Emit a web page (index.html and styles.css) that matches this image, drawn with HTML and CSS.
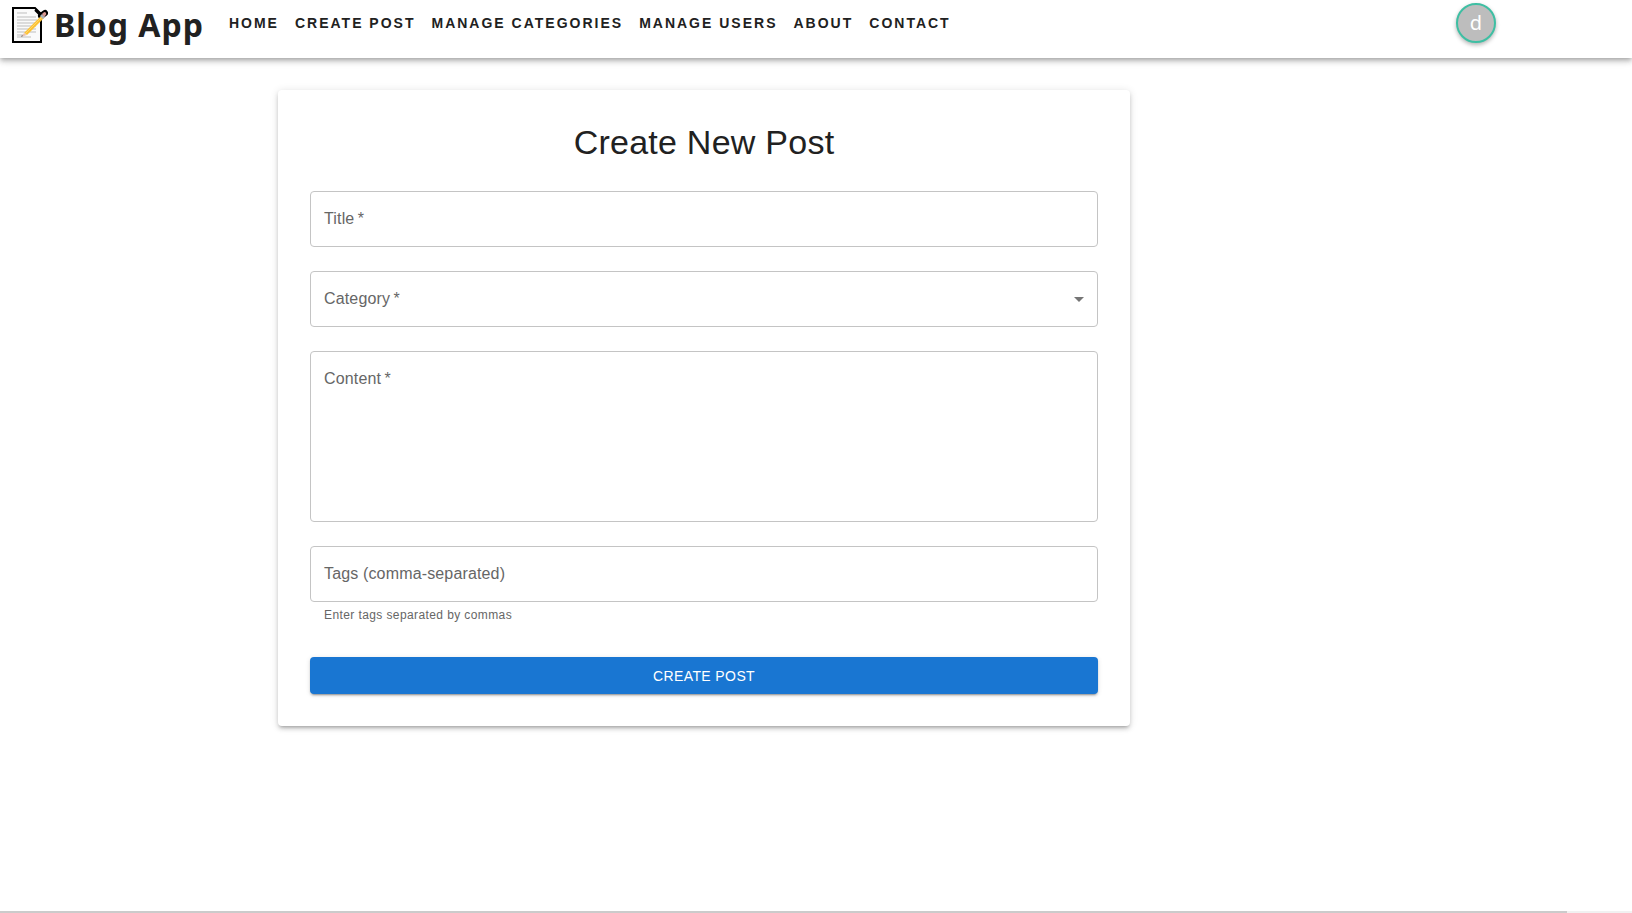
FILE: index.html
```html
<!DOCTYPE html>
<html lang="en">
<head>
<meta charset="utf-8">
<title>Blog App</title>
<link rel="stylesheet" href="styles.css">
</head>
<body>
<header class="app-bar">
  <a class="brand" href="#">
    <svg class="brand-icon" viewBox="0 0 36 36" aria-hidden="true">
      <path d="M1 1H23L29 7V35H1Z" fill="#fafafa" stroke="#000" stroke-width="2"/>
      <path d="M5 6H15M5 10H24M5 13H25M5 16H24M5 19H24M5 22H24M5 25H24M5 28H11M5 30H19" stroke="#bdbdbd" stroke-width="1"/>
      <path d="M29 9L33 6" stroke="#000" stroke-width="6" stroke-linecap="round"/>
      <path d="M23 3L29 9" stroke="#000" stroke-width="2"/>
      <path d="M12 26L29 9L32 11L15 28Z" fill="#fcc134"/>
      <path d="M13 27L30 10" stroke="#ffd566" stroke-width="1"/>
      <path d="M9 30L12 26L15 28Z" fill="#eac3b4"/>
      <path d="M9 30L10 28L11 29Z" fill="#666"/>
      <path d="M28 9L30 7L33 10L31 12Z" fill="#a9b3b8"/>
      <path d="M30 7L31 6Q33 4 34 6Q35 7 33 9L32 10Z" fill="#d99790"/>
    </svg>
    <span class="brand-name">Blog App</span>
  </a>
  <nav class="nav">
    <a href="#">Home</a>
    <a href="#">Create Post</a>
    <a href="#">Manage Categories</a>
    <a href="#">Manage Users</a>
    <a href="#">About</a>
    <a href="#">Contact</a>
  </nav>
  <button class="avatar" type="button" aria-label="Account menu">d</button>
</header>
<main class="page">
  <form class="card">
    <h1 class="card-title">Create New Post</h1>
    <div class="field">
      <label class="label" for="title">Title&#8201;*</label>
      <input class="control" id="title" type="text">
    </div>
    <div class="field">
      <label class="label" for="category">Category&#8201;*</label>
      <select class="control select" id="category"><option></option></select>
      <svg class="arrow" viewBox="0 0 24 24" aria-hidden="true"><path d="M7 10l5 5 5-5z"/></svg>
    </div>
    <div class="field">
      <label class="label" for="content">Content&#8201;*</label>
      <textarea class="control content" id="content"></textarea>
    </div>
    <div class="field">
      <label class="label" for="tags">Tags (comma-separated)</label>
      <input class="control" id="tags" type="text" aria-describedby="tags-help">
      <p class="helper" id="tags-help">Enter tags separated by commas</p>
    </div>
    <button class="submit" type="submit">Create Post</button>
  </form>
</main>
<div class="scroll-track" aria-hidden="true"><div class="scroll-thumb"></div></div>
</body>
</html>
```

FILE: styles.css
```css
* { box-sizing: border-box; }

body {
  margin: 0;
  min-height: 100vh;
  display: flex;
  flex-direction: column;
  background: #fff;
  color: #212121;
  font-family: Arial, "Liberation Sans", sans-serif;
}

.app-bar {
  display: flex;
  align-items: flex-start;
  height: 58px;
  padding: 3px 136px 0 12px;
  background: #fff;
  box-shadow: 0 2px 4px -1px rgba(0, 0, 0, .2), 0 4px 5px rgba(0, 0, 0, .14), 0 1px 10px rgba(0, 0, 0, .12);
}

.brand {
  display: flex;
  align-items: center;
  gap: 6px;
  height: 44px;
  color: #212121;
  text-decoration: none;
}

.brand-icon { width: 36px; height: 36px; }

.brand-name {
  font: 700 32px/44px "Comic Sans MS", "Noto Sans", sans-serif;
  letter-spacing: 1px;
}

.nav {
  display: flex;
  flex: 1;
  gap: 16px;
  margin-left: 25px;
}

.nav a {
  color: #212121;
  font-size: 14px;
  font-weight: 700;
  line-height: 40px;
  letter-spacing: 2px;
  text-transform: uppercase;
  text-decoration: none;
}

.avatar {
  width: 40px;
  height: 40px;
  padding: 0;
  border: 2px solid #3ebfa3;
  border-radius: 50%;
  background: #bdbdbd;
  color: #fff;
  font: 20px/34px "Noto Sans", sans-serif;
  box-shadow: 0 2px 4px rgba(0, 0, 0, .3);
}

.page {
  flex: 1;
  width: 100%;
  max-width: 1408px;
  padding: 32px 24px;
}

.card {
  display: flex;
  flex-direction: column;
  gap: 24px;
  max-width: 852px;
  margin: 0 auto;
  padding: 32px;
  border-radius: 4px;
  background: #fff;
  box-shadow: 0 3px 3px -2px rgba(0, 0, 0, .2), 0 3px 4px rgba(0, 0, 0, .14), 0 1px 8px rgba(0, 0, 0, .12);
}

.card-title {
  margin: 0 0 5px;
  font-size: 34px;
  font-weight: 400;
  line-height: 40px;
  letter-spacing: .00735em;
  text-align: center;
}

.field { position: relative; }

.label {
  position: absolute;
  top: 16px;
  left: 14px;
  color: #666;
  font-size: 16px;
  line-height: 23px;
  letter-spacing: .00938em;
  pointer-events: none;
}

.control {
  display: block;
  width: 100%;
  height: 56px;
  padding: 16px 14px;
  border: 1px solid #c4c4c4;
  border-radius: 4px;
  background: transparent;
  color: #212121;
  font: 16px/23px Arial, "Liberation Sans", sans-serif;
}

.select { appearance: none; }

.content { height: 171px; resize: none; }

.arrow {
  position: absolute;
  top: 16px;
  right: 7px;
  width: 24px;
  height: 24px;
  fill: #757575;
  pointer-events: none;
}

.helper {
  margin: 3px 14px 0;
  color: #666;
  font-size: 12px;
  line-height: 20px;
  letter-spacing: .03333em;
}

.submit {
  height: 37px;
  margin-top: 8px;
  border: 0;
  border-radius: 4px;
  background: #1976d2;
  color: #fff;
  font: 14px/24px Arial, "Liberation Sans", sans-serif;
  letter-spacing: .02857em;
  text-transform: uppercase;
  box-shadow: 0 3px 1px -2px rgba(0, 0, 0, .2), 0 2px 2px rgba(0, 0, 0, .14), 0 1px 5px rgba(0, 0, 0, .12);
}

.scroll-track { height: 2px; background: #f1f1f1; }

.scroll-thumb { width: 96%; height: 2px; background: #cbcbcb; }
```
